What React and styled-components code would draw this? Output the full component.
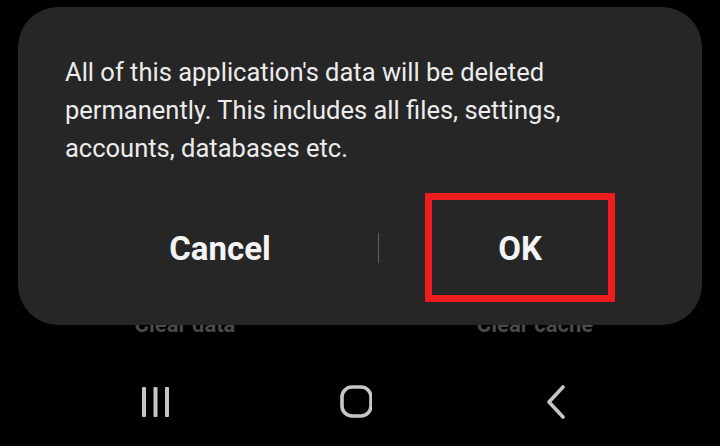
import React from 'react'
import styled, { createGlobalStyle } from 'styled-components'

const Global = createGlobalStyle`
  html, body { margin: 0; padding: 0; background: #000; }
  body { font-family: Roboto, "Liberation Sans", sans-serif; }
`

const Page = styled.div`
  position: relative;
  width: 720px;
  height: 446px;
  background: #000;
  overflow: hidden;
  display: flex;
  flex-direction: column;
`

const Actions = styled.div`
  display: flex;
  margin-top: 308px;
  height: 32px;
  align-items: center;
`

const Action = styled.div`
  width: ${p => p.w}px;
  text-align: center;
  font-size: 22px;
  font-weight: 700;
  color: #4a4a4a;
`

const NavBar = styled.div`
  flex: 1;
  display: flex;
  justify-content: center;
  align-items: center;
  gap: 168px;
  padding-right: 8px;
  padding-top: 18px;
`

const NavIcon = styled.svg`
  width: 32px;
  height: 34px;
  display: block;
`

const Dialog = styled.div`
  position: absolute;
  top: 7px;
  left: 18px;
  right: 18px;
  height: 318px;
  box-sizing: border-box;
  background: #262626;
  border-radius: 40px;
  padding: 46px 0 0 47px;
  display: flex;
  flex-direction: column;
`

const Message = styled.p`
  margin: 0;
  font-size: 25.5px;
  line-height: 38px;
  color: #ececec;
`

const ButtonRow = styled.div`
  display: flex;
  align-items: center;
  margin-top: 26px;
  margin-left: -3px;
`

const Button = styled.div`
  box-sizing: border-box;
  width: ${p => p.w}px;
  height: 109px;
  display: flex;
  align-items: center;
  justify-content: center;
  font-size: 33px;
  font-weight: 700;
  color: #f4f4f4;
  padding-top: 1px;
  border: ${p => (p.marked ? '7px solid #ec1c1f' : 'none')};
`

const Divider = styled.div`
  width: 1px;
  height: 30px;
  background: #5e5e5e;
  margin-right: 46px;
`

export default function App() {
  return (
    <Page>
      <Global />
      <Actions>
        <Action w={370}>Clear data</Action>
        <Action w={330}>Clear cache</Action>
      </Actions>
      <NavBar>
        <NavIcon viewBox="0 0 32 34">
          <g fill="#c6c6c6">
            <rect x="2" y="2" width="4" height="30" rx="1" />
            <rect x="13.5" y="2" width="4" height="30" rx="1" />
            <rect x="25" y="2" width="4" height="30" rx="1" />
          </g>
        </NavIcon>
        <NavIcon viewBox="0 0 32 34">
          <rect x="2" y="2" width="29" height="29" rx="10" fill="none" stroke="#c6c6c6" strokeWidth="3.6" />
        </NavIcon>
        <NavIcon viewBox="0 0 32 34">
          <path d="M23 2 L9 17 L23 32" fill="none" stroke="#c6c6c6" strokeWidth="3.6" strokeLinecap="round" strokeLinejoin="round" />
        </NavIcon>
      </NavBar>
      <Dialog>
        <Message>
          All of this application's data will be deleted
          <br />
          permanently. This includes all files, settings,
          <br />
          accounts, databases etc.
        </Message>
        <ButtonRow>
          <Button w={316}>Cancel</Button>
          <Divider />
          <Button w={190} marked>OK</Button>
        </ButtonRow>
      </Dialog>
    </Page>
  )
}
